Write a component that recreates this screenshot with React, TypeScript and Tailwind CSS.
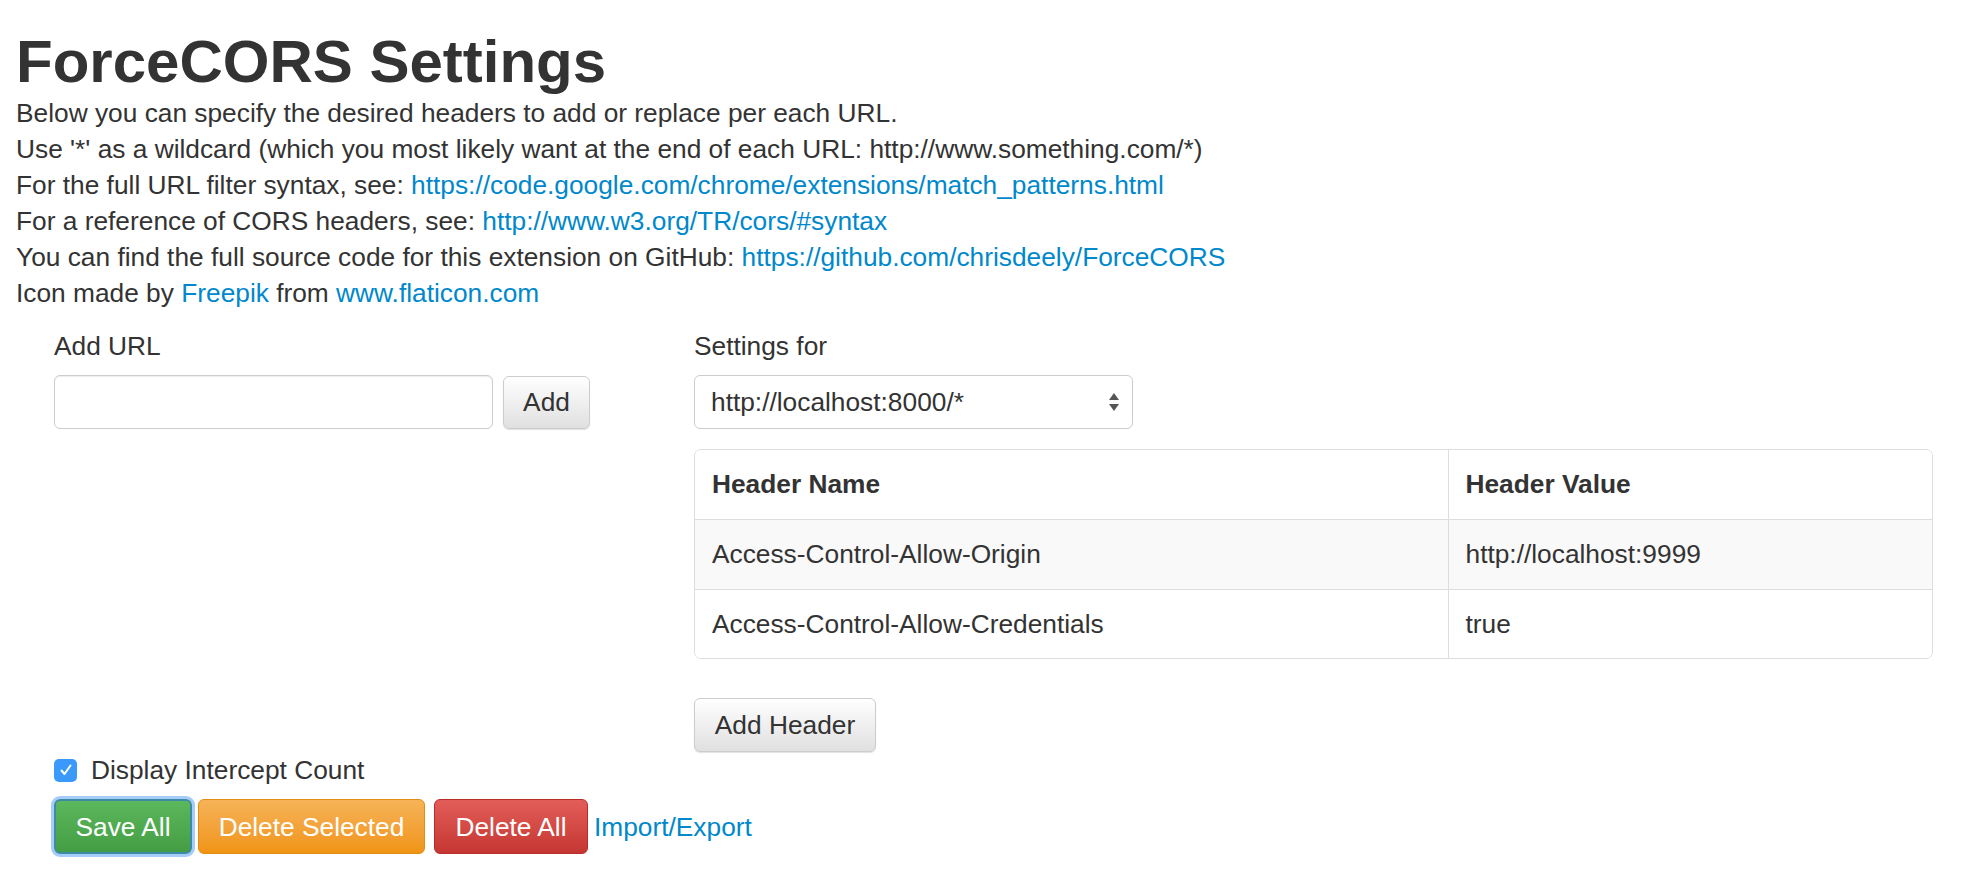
import React from "react";

const font = { fontFamily: '"Liberation Sans", Arial, Helvetica, sans-serif' };

function Link({ children }: { children: React.ReactNode }) {
  return <a className="text-[#0088cc] no-underline">{children}</a>;
}

export default function App() {
  return (
    <div className="min-h-[886px] w-[1978px] bg-white text-[#333333] text-[26.3px] leading-[36px]" style={font}>
      <div className="pl-[16px] pt-[29px]">
        <h1 className="text-[60px] leading-[66px] font-bold m-0">ForceCORS Settings</h1>
        <div>Below you can specify the desired headers to add or replace per each URL.</div>
        <div>Use '*' as a wildcard (which you most likely want at the end of each URL: http://www.something.com/*)</div>
        <div>
          For the full URL filter syntax, see: <Link>https://code.google.com/chrome/extensions/match_patterns.html</Link>
        </div>
        <div>
          For a reference of CORS headers, see: <Link>http://www.w3.org/TR/cors/#syntax</Link>
        </div>
        <div>
          You can find the full source code for this extension on GitHub: <Link>https://github.com/chrisdeely/ForceCORS</Link>
        </div>
        <div>
          Icon made by <Link>Freepik</Link> from <Link>www.flaticon.com</Link>
        </div>
      </div>

      <div className="pl-[54px] pr-[45px] pt-[17px]">
        <div className="flex">
          <div className="w-[640px] shrink-0">
            <div>Add URL</div>
            <div className="mt-[11px] flex items-center">
              <input
                className="w-[439px] h-[54px] rounded-[6px] border border-[#cccccc] bg-white px-3 shadow-[inset_0_1px_1px_rgba(0,0,0,0.075)] outline-none"
                style={font}
              />
              <button
                className="ml-[10px] h-[53px] w-[87px] rounded-[6px] border border-[#cccccc] bg-gradient-to-b from-white to-[#e0e0e0] text-[26.3px] text-[#333] shadow-[0_1px_1px_rgba(0,0,0,0.12)]"
                style={font}
              >
                Add
              </button>
            </div>
          </div>
          <div className="flex-1">
            <div>Settings for</div>
            <div className="mt-[11px] flex h-[54px] w-[439px] items-center justify-between rounded-[6px] border border-[#cccccc] bg-white pl-[16px] pr-[12px]">
              <span>http://localhost:8000/*</span>
              <svg width="12" height="22" viewBox="0 0 12 22">
                <path d="M6 2 L11 9 L1 9 Z" fill="#555" />
                <path d="M1 13 L11 13 L6 20 Z" fill="#555" />
              </svg>
            </div>
            <div className="mt-[20px] overflow-hidden rounded-[7px] border border-[#dddddd]">
              <table className="w-full border-collapse">
                <tbody>
                  <tr className="bg-white">
                    <td className="h-[69px] w-[753px] border-r border-b border-[#dddddd] px-[17px] font-bold">Header Name</td>
                    <td className="h-[69px] border-b border-[#dddddd] px-[17px] font-bold">Header Value</td>
                  </tr>
                  <tr className="bg-[#f9f9f9]">
                    <td className="h-[70px] border-r border-b border-[#dddddd] px-[17px]">Access-Control-Allow-Origin</td>
                    <td className="h-[70px] border-b border-[#dddddd] px-[17px]">http://localhost:9999</td>
                  </tr>
                  <tr className="bg-white">
                    <td className="h-[69px] border-r border-[#dddddd] px-[17px]">Access-Control-Allow-Credentials</td>
                    <td className="h-[69px] px-[17px]">true</td>
                  </tr>
                </tbody>
              </table>
            </div>
            <button
              className="mt-[39px] h-[54px] w-[182px] rounded-[6px] border border-[#cccccc] bg-gradient-to-b from-white to-[#e0e0e0] text-[26.3px] text-[#333] shadow-[0_1px_1px_rgba(0,0,0,0.12)]"
              style={font}
            >
              Add Header
            </button>
          </div>
        </div>

        <div className="flex items-center h-[36px]">
          <span className="flex h-[23px] w-[23px] items-center justify-center rounded-[5px] bg-[#3b99fc]">
            <svg width="14" height="14" viewBox="0 0 14 14">
              <path d="M2.5 7.5 L5.5 11 L11.5 2.5" stroke="white" strokeWidth="2" fill="none" strokeLinecap="round" strokeLinejoin="round" />
            </svg>
          </span>
          <span className="ml-[14px]">Display Intercept Count</span>
        </div>

        <div className="mt-[11px] flex items-center">
          <button
            className="h-[55px] w-[138px] rounded-[6px] border-2 border-[#3d8aa6] bg-gradient-to-b from-[#5cb85c] to-[#449d44] text-[26.3px] text-white shadow-[0_0_0_3px_#a6cdfa]"
            style={font}
          >
            Save All
          </button>
          <button
            className="ml-[6px] h-[55px] w-[227px] rounded-[6px] border border-[#e38d13] bg-gradient-to-b from-[#f6b356] to-[#f0940f] text-[26.3px] text-white"
            style={font}
          >
            Delete Selected
          </button>
          <button
            className="ml-[9px] h-[55px] w-[154px] rounded-[6px] border border-[#b92c28] bg-gradient-to-b from-[#e35d58] to-[#c53632] text-[26.3px] text-white"
            style={font}
          >
            Delete All
          </button>
          <span className="ml-[6px]">
            <Link>Import/Export</Link>
          </span>
        </div>
      </div>
    </div>
  );
}
